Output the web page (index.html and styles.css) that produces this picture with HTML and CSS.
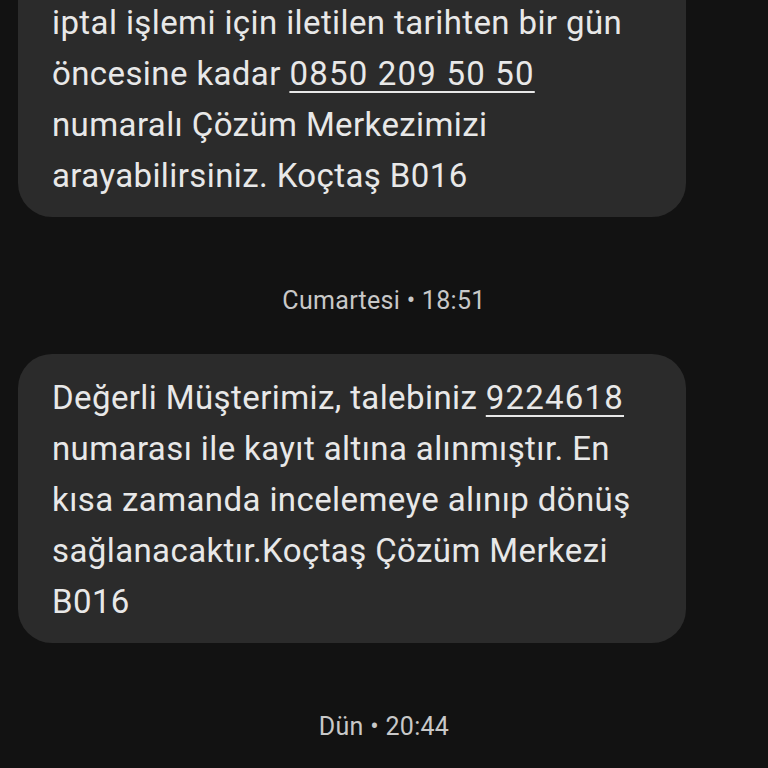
FILE: index.html
```html
<!DOCTYPE html>
<html lang="tr">
<head>
<meta charset="utf-8">
<link rel="stylesheet" href="styles.css">
</head>
<body>
<div class="thread">
  <div class="bubble bubble-cut">
    <p class="msg">iptal işlemi için iletilen tarihten bir gün öncesine kadar <span class="link">0850 209 50 50</span> numaralı Çözüm Merkezimizi arayabilirsiniz. Koçtaş B016</p>
  </div>
  <div class="stamp">Cumartesi • 18:51</div>
  <div class="bubble">
    <p class="msg">Değerli Müşterimiz, talebiniz <span class="link">9224618</span> numarası ile kayıt altına alınmıştır. En kısa zamanda incelemeye alınıp dönüş sağlanacaktır.Koçtaş Çözüm Merkezi B016</p>
  </div>
  <div class="stamp">Dün • 20:44</div>
</div>
</body>
</html>
```
FILE: styles.css
```css
html, body {
  margin: 0;
  padding: 0;
  background: #121212;
}
body {
  width: 768px;
  height: 768px;
  overflow: hidden;
  font-family: Roboto, "Noto Sans", sans-serif;
}
.thread {
  display: flex;
  flex-direction: column;
}
.bubble {
  background: #2b2b2b;
  border-radius: 34px;
  margin: 0 82px 0 18px;
  padding: 18px 30px 16px 34px;
}
.bubble-cut {
  margin-top: -80px;
  padding-top: 77px;
}
.msg {
  margin: 0;
  color: #e8e8e8;
  font-size: 33px;
  letter-spacing: 0.4px;
  line-height: 51px;
}
.link {
  text-decoration: underline;
  text-decoration-thickness: 2px;
  text-underline-offset: 6px;
  letter-spacing: 1.2px;
}
.stamp {
  text-align: center;
  color: #c8c8c8;
  font-size: 25px;
  letter-spacing: 0.3px;
  line-height: 30px;
  margin: 69px 0 38px;
}
```
